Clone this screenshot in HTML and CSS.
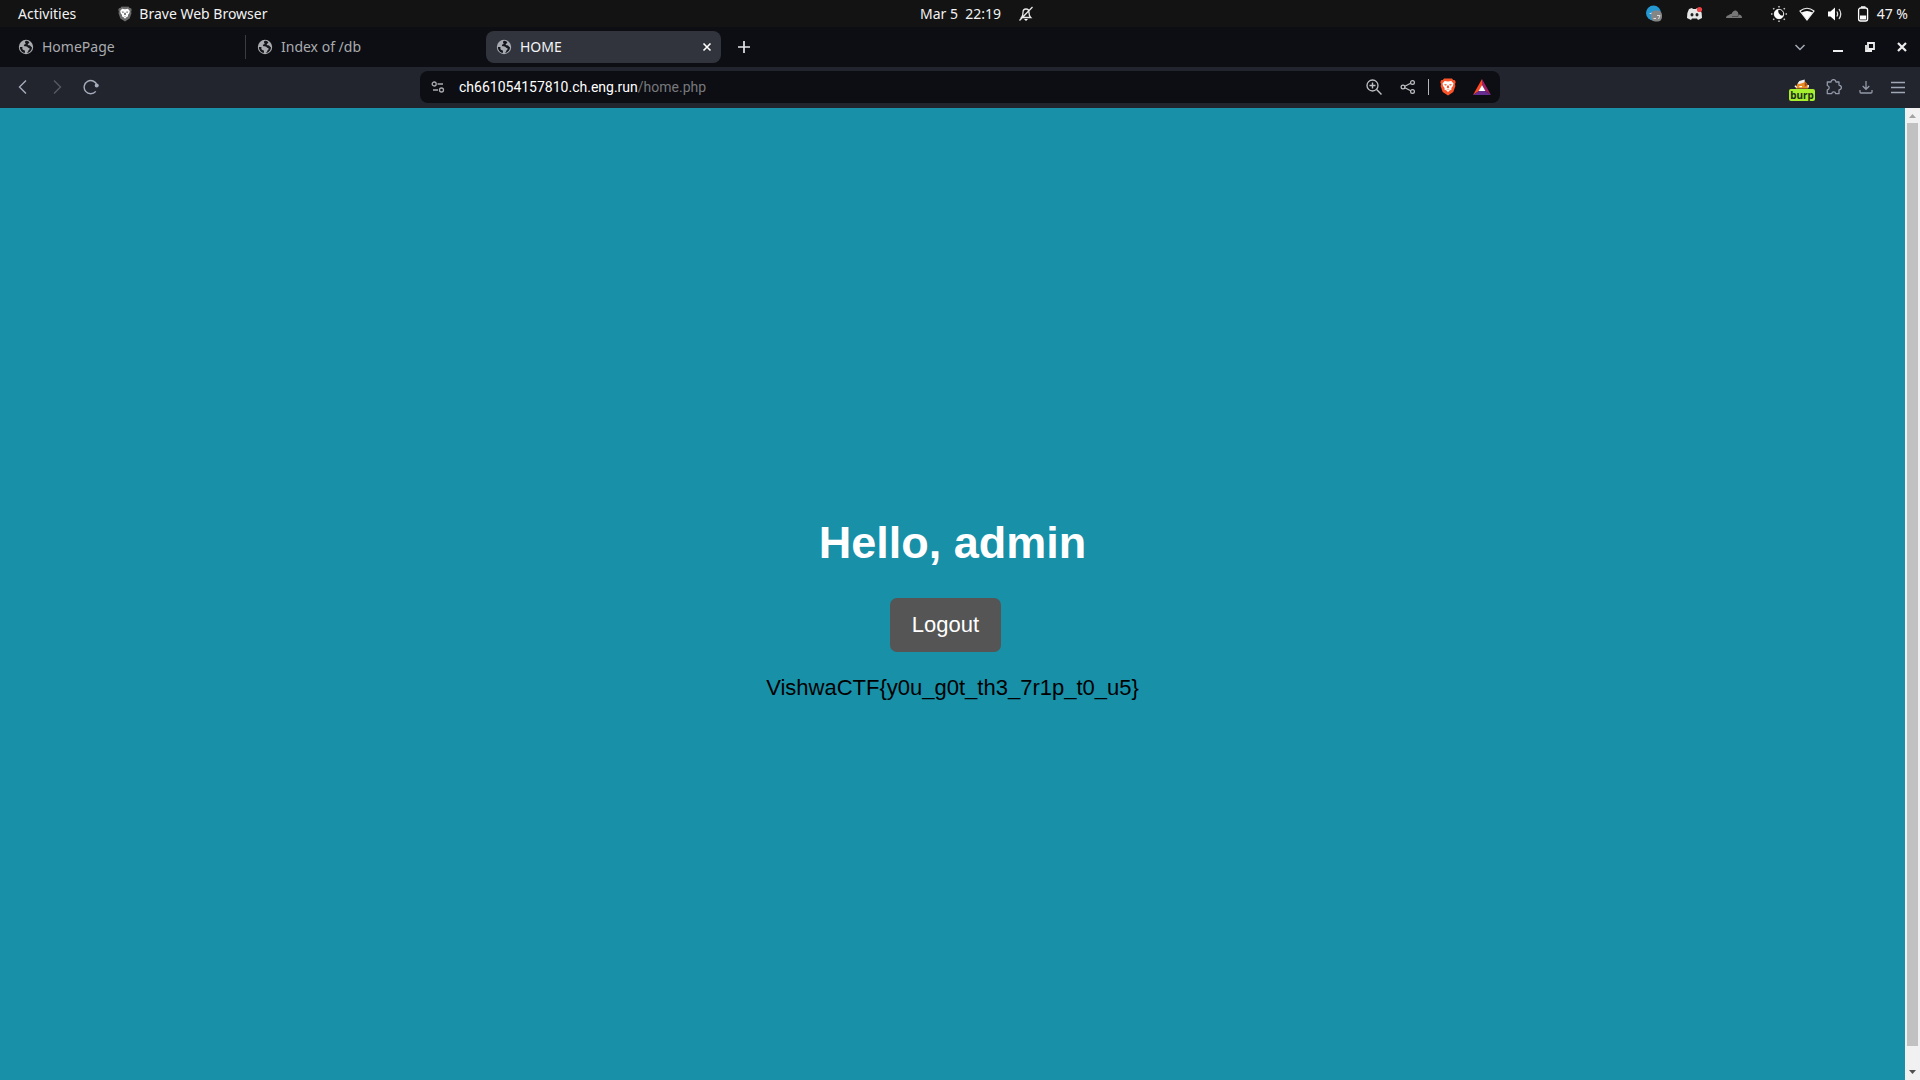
FILE: index.html
```html
<!DOCTYPE html>
<html lang="en">
<head>
<meta charset="utf-8">
<title>HOME</title>
<link rel="stylesheet" href="styles.css">
</head>
<body>
<svg class="defs" aria-hidden="true">
  <symbol id="globe" viewBox="0 0 16 16">
    <circle cx="8" cy="8" r="7.2" fill="currentColor"/>
    <path class="globe-land" d="M8.6 1.8C6.800 2 6.600 3.400 7.500 4.200C8 4.700 7.200 5.400 6.300 5.600C5.600 5.800 5.700 7 6.600 7.200C8 7.300 9.300 7.200 9.700 8.300C10.100 9.400 11.600 8.700 11.700 9.800C11.600 10.800 10.500 11 10.300 12C10.200 12.800 9.500 13.500 8.500 14.100L10.300 13.700C12.600 12.700 14 10.600 14 8.200C13 8.200 12.900 7 12 6.500C11 6.200 9.800 6.500 9.700 5.500C9.700 4.500 11 4.600 11.300 3.500C10.700 2.600 9.700 2 8.600 1.800ZM1.900 8C1.900 11 4 13.500 6.800 14.100C6.700 12.900 7.400 12.200 6.700 11.400C6 10.700 4.700 11 4.400 9.900C4.200 9 4.900 8.700 4.200 8.100Z"/>
  </symbol>
  <symbol id="lion" viewBox="0 0 16 18">
    <path fill="currentColor" d="M4 .5H12L13.200 2L15 2.300L15.700 4.500L15 6L15.400 8L13.300 14L8 17.500L2.700 14L.6 8L1 6L.3 4.500L1 2.300L2.800 2Z"/>
    <path fill="#fff" d="M4.700 3L8 3.600L11.300 3L13.500 5.500L12.900 8L11.300 10L11.600 11.500L9.500 12.600L8 14.300L6.500 12.600L4.400 11.500L4.700 10L3.100 8L2.500 5.500Z"/>
    <path fill="currentColor" d="M4.300 6L7 6.500L6.200 7.500H4.900ZM11.700 6L9 6.500L9.800 7.500H11.100ZM7.200 7.500H8.800L9.200 9.500L8 10.500L6.800 9.500ZM5.900 11L8 12L10.100 11L8 11.500Z"/>
  </symbol>
</svg>

<header class="system-bar">
  <div class="system-left">
    <button class="plain" type="button">Activities</button>
    <button class="plain app-name" type="button"><svg class="i-lion gray" viewBox="0 0 16 18"><use href="#lion"/></svg>Brave Web Browser</button>
  </div>
  <div class="clock">
    <time>Mar 5&nbsp; 22:19</time>
    <svg class="i-16" viewBox="0 0 16 16"><path d="M3.500 11.500Q5 10 5 6.500Q5 3 8 3T11 6.500Q11 10 12.700 11.500ZM1.500 14.500L14.500 1" fill="none" stroke="#e8e8e8" stroke-width="1.300"/><path d="M6 13H10L8 15Z" fill="#fff"/></svg>
  </div>
  <div class="tray">
    <div class="tray-apps">
      <svg class="i-20" viewBox="0 0 20 20"><circle cx="9.500" cy="9" r="7.500" fill="#2597d1"/><path d="M5 10L9 8V10Z" fill="#fff"/><rect x="7" y="6.500" width="11" height="11" rx="4.500" fill="#858585"/><path d="M9.500 14.500H12M13 11.500H16L14.500 15" stroke="#ddd" fill="none"/></svg>
      <svg class="i-20" viewBox="0 0 20 20"><path d="M5 5L8 4L9 5H12L13 4L16 5Q18.500 9 18 14L14 16L13 14.500H8L7 16L3 14Q2.500 9 5 5Z" fill="#e6e6e6"/><ellipse cx="8" cy="10.800" rx="1.500" ry="1.700" fill="#222"/><ellipse cx="13" cy="10.800" rx="1.500" ry="1.700" fill="#222"/><circle cx="15.500" cy="5.500" r="2.600" fill="#ed4245"/></svg>
      <svg class="i-20" viewBox="0 0 20 20"><path d="M2 14Q2 11.500 5 11Q6 9.500 7.500 10Q9 6 12 6.500Q14.500 7.500 14.500 10.500Q18 10.500 18 14Z" fill="#777"/><path d="M8 12.500H14L14.500 10" stroke="#333" stroke-width=".6" fill="none"/></svg>
    </div>
    <div class="tray-status">
      <svg class="i-16" viewBox="0 0 16 16"><circle cx="8" cy="8" r="4.700" fill="none" stroke="#eee" stroke-width="1"/><path d="M7.500 3.300A4.700 4.700 0 1 0 12.600 9Q11 10 9.300 9Q6.500 7 7.500 3.300Z" fill="#fff"/><path d="M8 0V1.500M8 14.500V16M0 8H1.500M14.500 8H16M2.200 2.200L3.300 3.300M12.700 12.700L13.800 13.800M2.200 13.800L3.300 12.700M12.700 3.300L13.800 2.200" stroke="#ccc" stroke-width="1.500"/></svg>
      <svg class="i-16" viewBox="0 0 16 16"><path d="M1 5Q8-.5 15 5L8 14Z" fill="none" stroke="#eee" stroke-width="1.100"/><path d="M2.500 6.500Q8 3.500 13.500 6.500L8 14Z" fill="#fff"/></svg>
      <svg class="i-16" viewBox="0 0 16 16"><path d="M1 5.500H3.500L8 1.500V14.500L3.500 10.500H1Z" fill="#fff"/><path d="M9.800 5.500Q11.500 8 9.800 10.500M12 3Q15.500 8 12 13" fill="none" stroke="#ddd" stroke-width="1.300"/></svg>
      <svg class="i-16" viewBox="0 0 16 16"><rect x="3.600" y="2" width="9" height="13" rx="2" fill="none" stroke="#fff" stroke-width="1.300"/><path d="M6 1H10.500" stroke="#fff" stroke-width="1.500"/><path d="M5 9.500H11.200V13.500H5Z" fill="#fff"/></svg>
      <span>47 %</span>
    </div>
  </div>
</header>

<nav class="tab-strip" aria-label="Tabs">
  <button class="tab" type="button"><svg class="i-16" viewBox="0 0 16 16"><use href="#globe"/></svg><span>HomePage</span></button>
  <button class="tab divided" type="button"><svg class="i-16" viewBox="0 0 16 16"><use href="#globe"/></svg><span>Index of /db</span></button>
  <div class="tab active"><svg class="i-16" viewBox="0 0 16 16"><use href="#globe"/></svg><span>HOME</span>
    <button class="tab-close" type="button" aria-label="Close tab"><svg class="i-10" viewBox="0 0 10 10"><path d="M1.500 1.500L8.500 8.500M8.500 1.500L1.500 8.500" stroke="#fff" stroke-width="1.600"/></svg></button>
  </div>
  <button class="new-tab" type="button" aria-label="New tab"><svg class="i-12" viewBox="0 0 12 12"><path d="M6 0V12M0 6H12" stroke="#e4e5e8" stroke-width="1.700"/></svg></button>
  <div class="window-controls">
    <button class="win" type="button" aria-label="Search tabs"><svg class="i-12" viewBox="0 0 12 12"><path d="M1.500 4L6 8.500L10.500 4" fill="none" stroke="#a5aab5" stroke-width="1.500"/></svg></button>
    <button class="win" type="button" aria-label="Minimize"><svg class="i-12" viewBox="0 0 12 12"><path d="M1 10H11" stroke="#eee" stroke-width="2"/></svg></button>
    <button class="win" type="button" aria-label="Restore"><svg class="i-12" viewBox="0 0 12 12"><path d="M4 2H10V8H4ZM2 4V10H8" fill="none" stroke="#eee" stroke-width="1.800"/></svg></button>
    <button class="win" type="button" aria-label="Close window"><svg class="i-12" viewBox="0 0 12 12"><path d="M2 2L10 10M10 2L2 10" stroke="#eee" stroke-width="2.200"/></svg></button>
  </div>
</nav>

<div class="toolbar">
  <div class="nav-buttons">
    <button class="tool" type="button" aria-label="Back"><svg class="i-16" viewBox="0 0 16 16"><path d="M11 1.500L4.500 8L11 14.500" fill="none" stroke="#a5acbb" stroke-width="1.400"/></svg></button>
    <button class="tool" type="button" aria-label="Forward"><svg class="i-16" viewBox="0 0 16 16"><path d="M5 1.500L11.500 8L5 14.500" fill="none" stroke="#555a65" stroke-width="1.400"/></svg></button>
    <button class="tool" type="button" aria-label="Reload"><svg class="i-16" viewBox="0 0 16 16"><path d="M12.800 12.400A6.600 6.600 0 1 1 14 6" fill="none" stroke="#a5acbb" stroke-width="1.400"/><circle cx="13.700" cy="6.500" r="2" fill="#a5acbb"/></svg></button>
  </div>
  <div class="address" role="group" aria-label="Address bar">
    <button class="site-info" type="button" aria-label="Site information"><svg class="i-14" viewBox="0 0 14 14"><g fill="none" stroke="#a8aab0" stroke-width="1.300"><circle cx="3.200" cy="4" r="2"/><path d="M6.500 4H12M2 10H7"/><circle cx="10.500" cy="10" r="2"/></g></svg></button>
    <a class="url" href="#">ch661054157810.ch.eng.run<span>/home.php</span></a>
    <button class="in-bar" type="button" aria-label="Zoom"><svg class="i-16" viewBox="0 0 16 16"><path d="M10.600 10.600L15.500 15.500M6.500 3.500V9.500M3.500 6.500H9.500" stroke="#c0c1c4" stroke-width="1.400"/><circle cx="6.500" cy="6.500" r="5.500" fill="none" stroke="#c0c1c4" stroke-width="1.300"/></svg></button>
    <button class="in-bar" type="button" aria-label="Share"><svg class="i-16" viewBox="0 0 16 16"><g fill="none" stroke="#c0c1c4" stroke-width="1.200"><circle cx="3" cy="8" r="1.900"/><circle cx="12.500" cy="3.500" r="1.900"/><circle cx="12.500" cy="12.500" r="1.900"/><path d="M4.800 7.200L10.700 4.300M4.800 8.800L10.700 11.700"/></g></svg></button>
    <i class="bar-line"></i>
    <button class="in-bar shields" type="button" aria-label="Shields"><svg class="i-shield" viewBox="0 0 16 18"><use href="#lion"/></svg></button>
    <button class="in-bar" type="button" aria-label="Rewards"><svg class="i-18" viewBox="0 0 18 16"><path d="M9 0L0 16L6 12L9 6Z" fill="#ff4724"/><path d="M9 0L18 16L12 12L9 6Z" fill="#9e1f63"/><path d="M0 16H18L12 12H6Z" fill="#662d91"/><path d="M9 6L12.400 12H5.600Z" fill="#fff"/></svg></button>
  </div>
  <div class="extensions">
    <button class="tool burp" type="button" aria-label="FoxyProxy"><svg class="i-fox" viewBox="0 0 18 10"><path d="M2 10Q3 2 10 1Q16 3 16 10Z" fill="#e98b25"/><path d="M4 4.500L6 1.500L12 0V3L6 5Z" fill="#eee"/><path d="M12 2L15 6L12 8Z" fill="#a64c16"/><path d="M1 7L3 9M16 6V9M6 8H9" stroke="#fff" stroke-width="1.500"/></svg><span>burp</span></button>
    <button class="tool" type="button" aria-label="Extensions"><svg class="i-16" viewBox="0 0 16 16"><path d="M1.300 3H5Q5.200 .6 7.500 .6T10 3H13V6Q15.400 6.500 15.400 8.500T13 11V14.700H9.700Q9.400 12.900 7.700 12.900T5.700 14.700H1.300V11Q3.200 10.500 3.200 8.800T1.300 6.500Z" fill="none" stroke="#9299a8" stroke-width="1.300" stroke-linejoin="round"/></svg></button>
    <button class="tool" type="button" aria-label="Downloads"><svg class="i-14" viewBox="0 0 14 14"><path d="M7 1V9M3.700 6L7 9.300L10.300 6M1 10V12Q1 13 2 13H12Q13 13 13 12V10" fill="none" stroke="#9299a8" stroke-width="1.300"/></svg></button>
    <button class="tool" type="button" aria-label="Menu"><svg class="i-14" viewBox="0 0 14 14"><path d="M0 2.500H14M0 7.500H14M0 12.500H14" stroke="#a0a7b6" stroke-width="1.300"/></svg></button>
  </div>
</div>

<div class="viewport">
  <main class="page">
    <h1>Hello, admin</h1>
    <a class="logout" href="#">Logout</a>
    <p>VishwaCTF{y0u_g0t_th3_7r1p_t0_u5}</p>
  </main>
  <div class="scrollbar" aria-hidden="true">
    <svg class="arrow up" viewBox="0 0 15 15"><path d="M4 10L7.500 6L11 10Z" fill="#a3a3a3"/></svg>
    <div class="track"><div class="thumb"></div></div>
    <svg class="arrow" viewBox="0 0 15 15"><path d="M4 5L7.500 9L11 5Z" fill="#505050"/></svg>
  </div>
</div>
</body>
</html>
```
FILE: styles.css
```css
* { box-sizing: border-box; }

body {
  margin: 0;
  min-height: 100vh;
  display: flex;
  flex-direction: column;
  font: 14px/20px "Noto Sans", "Open Sans", sans-serif;
  color: #f2f2f2;
  background: #1790a8;
}

svg { display: block; flex: none; }
.defs { position: absolute; width: 0; height: 0; }
button { font: inherit; color: inherit; border: 0; padding: 0; background: none; }

.i-10 { width: 10px; height: 10px; }
.i-12 { width: 12px; height: 12px; }
.i-14 { width: 14px; height: 14px; }
.i-16 { width: 16px; height: 16px; }
.i-18 { width: 18px; height: 16px; }
.i-20 { width: 20px; height: 20px; }
.i-lion { width: 14px; height: 16px; }
.i-shield { width: 16px; height: 18px; }
.i-fox { width: 16px; height: 10px; }

/* Desktop bar */
.system-bar {
  display: grid;
  grid-template-columns: 1fr auto 1fr;
  align-items: center;
  height: 27px;
  padding: 0 12px 0 18px;
  background: #131313;
}
.system-left { display: flex; gap: 42px; }
.app-name { display: flex; align-items: center; gap: 7px; }
.gray { color: #6b6b6b; }
.clock { display: flex; align-items: center; gap: 17px; padding-left: 28px; }
.tray { display: flex; justify-content: flex-end; align-items: center; gap: 27px; }
.tray-apps { display: flex; gap: 20px; }
.tray-status { display: flex; align-items: center; gap: 12px; }
.tray-status span { margin-left: -6px; }

/* Tabs */
.tab-strip {
  display: flex;
  align-items: center;
  gap: 4px;
  height: 40px;
  padding: 0 2px 0 8px;
  background: #0d0e13;
}
.tab {
  display: flex;
  align-items: center;
  gap: 8px;
  width: 235px;
  height: 32px;
  padding: 0 8px 0 10px;
  border-radius: 8px;
  color: #a9abaf;
  text-align: left;
}
.globe-land { fill: #15171d; }
.divided { position: relative; }
.divided::before {
  content: "";
  position: absolute;
  left: -2px;
  top: 4px;
  width: 1px;
  height: 24px;
  background: #3a3c43;
}
.active { background: #31343d; color: #a9abb3; }
.active span { color: #f4f4f6; }
.tab-close { margin-left: auto; padding: 1px; }
.new-tab { padding: 12px; margin-left: 1px; }
.window-controls { display: flex; margin-left: auto; }
.win { display: grid; place-items: center; width: 32px; height: 32px; }
.win:first-child { margin-right: 6px; }

/* Toolbar */
.toolbar {
  display: grid;
  grid-template-columns: 1fr minmax(0, 1080px) 1fr;
  align-items: center;
  height: 41px;
  padding: 0 8px 1px;
  background: #22252d;
}
.nav-buttons, .extensions { display: flex; gap: 4px; }
.extensions { justify-content: flex-end; }
.tool { display: grid; place-items: center; width: 30px; height: 32px; }
.extensions .tool { width: 28px; }
.address {
  display: flex;
  align-items: center;
  height: 32px;
  padding: 0 3px 0 11px;
  border-radius: 8px;
  background: #0d0e13;
}
.url {
  flex: 1;
  margin-left: 14px;
  color: #fff;
  font-family: Roboto, "Noto Sans", sans-serif;
  text-decoration: none;
}
.url span { color: #77797d; }
.in-bar { display: grid; place-items: center; width: 30px; height: 30px; margin-left: 4px; }
.bar-line { width: 1px; height: 16px; margin-left: 5px; background: #b5b6b9; }
.shields { color: #fb542b; }
.burp { align-content: center; padding-top: 6px; }
.burp span {
  padding: 0 1px;
  border-radius: 2px;
  background: #a6f02f;
  color: #20301a;
  font: bold 10px/12px "Noto Sans", sans-serif;
}

/* Web page */
.viewport { flex: 1; display: flex; }
.page {
  flex: 1;
  display: flex;
  flex-direction: column;
  align-items: center;
  justify-content: center;
  padding-top: 29px;
  font: 22px/26px "Liberation Sans", Arial, sans-serif;
}
h1 { margin: 0 0 29px; font-size: 45px; line-height: 52px; color: #fff; }
.logout {
  margin-right: 14px;
  padding: 14px 22px;
  border-radius: 7px;
  background: #555;
  color: #fff;
  text-decoration: none;
}
.page p { margin: 23px 0 0; color: #000; }

.scrollbar { display: flex; flex-direction: column; width: 15px; background: #f1f1f1; }
.arrow { width: 15px; height: 15px; }
.track { flex: 1; padding: 0 2px; }
.thumb { height: 98%; background: #c1c1c1; }
```
